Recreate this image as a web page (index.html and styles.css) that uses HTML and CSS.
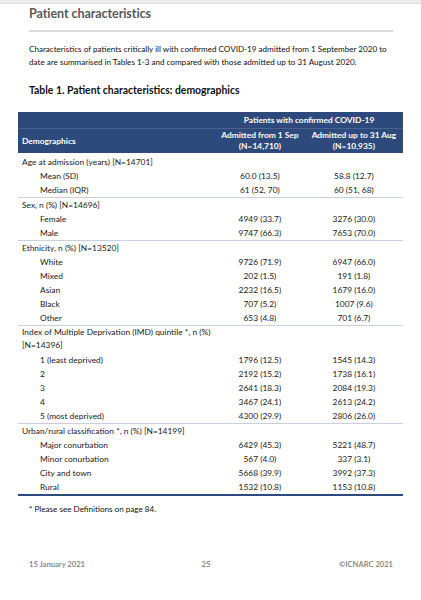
FILE: index.html
```html
<!DOCTYPE html>
<html lang="en">
<head>
    <meta charset="UTF-8">
    <meta name="viewport" content="width=device-width, initial-scale=1.0">
    <title>Patient characteristics</title>
    <link rel="stylesheet" href="styles.css">
</head>
<body>

    <div class="page-edge"></div>

    <div class="sheet">

        <h2 class="section-title">Patient characteristics</h2>

        <p class="intro">Characteristics of patients critically ill with confirmed COVID-19 admitted from 1 September 2020 to date are summarised in Tables 1-3 and compared with those admitted up to 31 August 2020.</p>

        <h3 class="table-title">Table 1. Patient characteristics: demographics</h3>

        <table class="data-table">
            <thead>
                <tr class="head-top">
                    <th></th>
                    <th colspan="2">Patients with confirmed COVID-19</th>
                </tr>
                <tr class="head-main">
                    <th class="label">Demographics</th>
                    <th>Admitted from 1 Sep<br>(N=14,710)</th>
                    <th>Admitted up to 31 Aug<br>(N=10,935)</th>
                </tr>
            </thead>

            <!-- Age -->
            <tbody class="group first">
                <tr><td class="label" colspan="3">Age at admission (years) [N=14701]</td></tr>
                <tr><td class="sub">Mean (SD)</td><td>60.0 (13.5)</td><td>58.8 (12.7)</td></tr>
                <tr><td class="sub">Median (IQR)</td><td>61 (52, 70)</td><td>60 (51, 68)</td></tr>
            </tbody>

            <!-- Sex -->
            <tbody class="group">
                <tr><td class="label" colspan="3">Sex, n (%) [N=14696]</td></tr>
                <tr><td class="sub">Female</td><td>4949 (33.7)</td><td>3276 (30.0)</td></tr>
                <tr><td class="sub">Male</td><td>9747 (66.3)</td><td>7653 (70.0)</td></tr>
            </tbody>

            <!-- Ethnicity -->
            <tbody class="group">
                <tr><td class="label" colspan="3">Ethnicity, n (%) [N=13520]</td></tr>
                <tr><td class="sub">White</td><td>9726 (71.9)</td><td>6947 (66.0)</td></tr>
                <tr><td class="sub">Mixed</td><td>202 (1.5)</td><td>191 (1.8)</td></tr>
                <tr><td class="sub">Asian</td><td>2232 (16.5)</td><td>1679 (16.0)</td></tr>
                <tr><td class="sub">Black</td><td>707 (5.2)</td><td>1007 (9.6)</td></tr>
                <tr><td class="sub">Other</td><td>653 (4.8)</td><td>701 (6.7)</td></tr>
            </tbody>

            <!-- IMD -->
            <tbody class="group">
                <tr><td class="label wrap" colspan="3">Index of Multiple Deprivation (IMD) quintile *, n (%)<br>[N=14396]</td></tr>
                <tr><td class="sub">1 (least deprived)</td><td>1796 (12.5)</td><td>1545 (14.3)</td></tr>
                <tr><td class="sub">2</td><td>2192 (15.2)</td><td>1738 (16.1)</td></tr>
                <tr><td class="sub">3</td><td>2641 (18.3)</td><td>2084 (19.3)</td></tr>
                <tr><td class="sub">4</td><td>3467 (24.1)</td><td>2613 (24.2)</td></tr>
                <tr><td class="sub">5 (most deprived)</td><td>4300 (29.9)</td><td>2806 (26.0)</td></tr>
            </tbody>

            <!-- Urban/rural -->
            <tbody class="group last">
                <tr><td class="label" colspan="3">Urban/rural classification *, n (%) [N=14199]</td></tr>
                <tr><td class="sub">Major conurbation</td><td>6429 (45.3)</td><td>5221 (48.7)</td></tr>
                <tr><td class="sub">Minor conurbation</td><td>567 (4.0)</td><td>337 (3.1)</td></tr>
                <tr><td class="sub">City and town</td><td>5668 (39.9)</td><td>3992 (37.3)</td></tr>
                <tr><td class="sub">Rural</td><td>1532 (10.8)</td><td>1153 (10.8)</td></tr>
            </tbody>
        </table>

        <p class="footnote">* Please see Definitions on page 84.</p>

        <!-- Footer Section -->
        <footer class="page-footer">
            <span>15 January 2021</span>
            <span class="page-num">25</span>
            <span>&copy;ICNARC 2021</span>
        </footer>

    </div>

</body>
</html>
```

FILE: styles.css
```css
body {
    font-family: Lato, "Open Sans", sans-serif;
    background-color: white;
    color: #1a1a1a;
    margin: 0;
    padding: 0;
}

.page-edge {
    height: 3px;
    background-color: #ececec;
    border-bottom: 1px solid #dcdcdc;
}

.sheet {
    padding: 0 18px;
}

.section-title {
    margin: 0 10px 0 11px;
    padding: 1px 0 7px;
    font-size: 12.6px;
    font-weight: bold;
    letter-spacing: -0.1px;
    color: #5a5a5a;
    border-bottom: 2px solid #dadada;
    line-height: 18px;
}

.intro {
    margin: 11px 10px 0 11px;
    font-size: 8.1px;
    line-height: 13px;
    color: #111;
}

.table-title {
    margin: 14px 11px 0;
    font-size: 10.4px;
    line-height: 14px;
    font-weight: bold;
    color: #111;
}

.data-table {
    width: 385px;
    margin-top: 15px;
    border-collapse: collapse;
    font-size: 8.4px;
    color: #1a1a1a;
}

.data-table th {
    background-color: #2e4a7c;
    color: white;
    font-weight: bold;
    text-align: center;
    padding: 0;
}

.head-top th {
    height: 16px;
    border-bottom: 1px solid #4a6291;
}

.head-main th {
    height: 24px;
    line-height: 11px;
}

.head-main th.label {
    text-align: left;
    padding-left: 4px;
    width: 193px;
}

.data-table td {
    height: 14px;
    padding: 0;
    text-align: center;
    line-height: 14px;
}

.data-table td.label {
    text-align: left;
    padding-left: 4px;
}

.data-table td.wrap {
    line-height: 13px;
    padding-bottom: 1px;
}

.data-table td.sub {
    text-align: left;
    padding-left: 22px;
}

.group {
    border-bottom: 1px solid #c7cfe0;
}

.group.first tr:first-child td {
    padding-top: 2px;
}

.group.last {
    border-bottom: 2px solid #2e4a7c;
}

.footnote {
    margin: 7px 11px 0;
    font-size: 8.1px;
    line-height: 12px;
    color: #111;
}

.page-footer {
    display: flex;
    justify-content: space-between;
    margin: 44px 10px 0 11px;
    font-size: 7.6px;
    font-weight: bold;
    color: #8a8a8a;
}

.page-num {
    margin-right: 12px;
}
```
